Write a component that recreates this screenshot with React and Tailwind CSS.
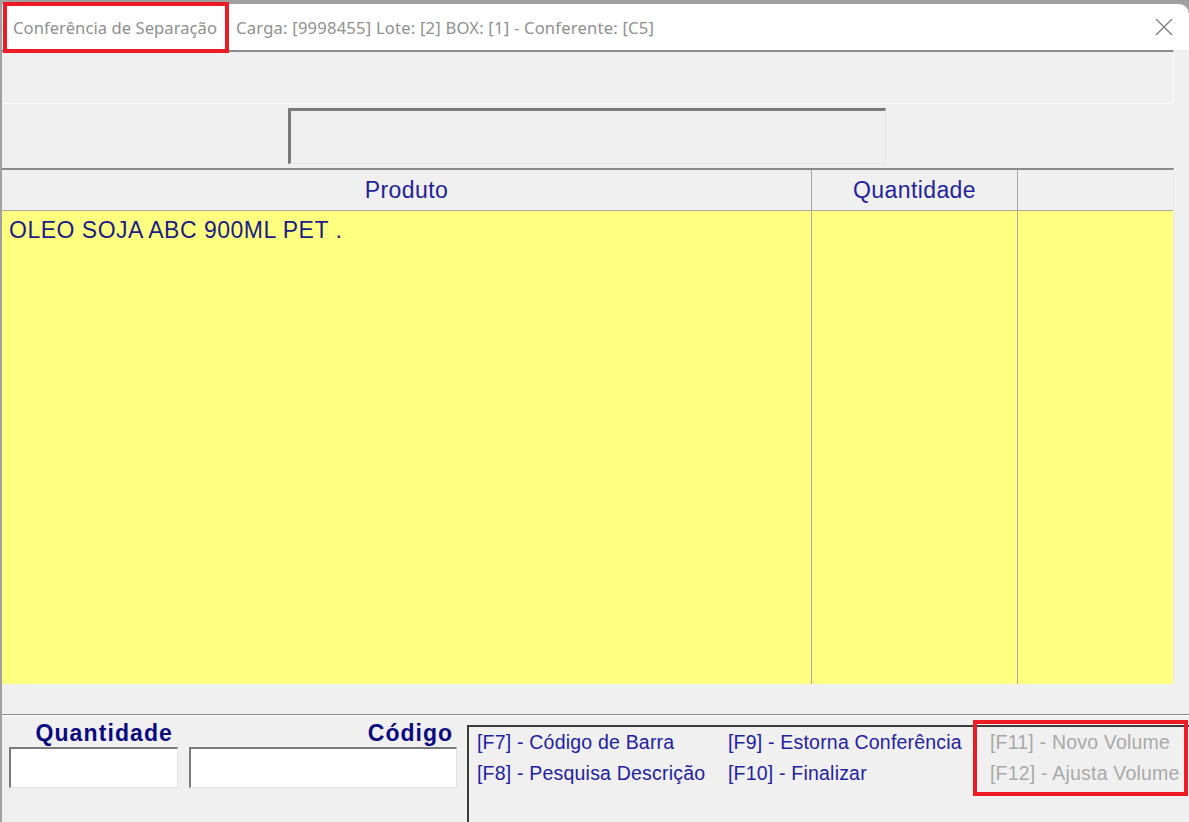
import React from "react";

const fkeys = [
  [
    { label: "[F7] - Código de Barra" },
    { label: "[F8] - Pesquisa Descrição" },
  ],
  [
    { label: "[F9] - Estorna Conferência" },
    { label: "[F10] - Finalizar" },
  ],
  [
    { label: "[F11] - Novo Volume", disabled: true },
    { label: "[F12] - Ajusta Volume", disabled: true },
  ],
];

const App = () => {
  return (
    <div className="relative w-[1189px] h-[822px] overflow-hidden bg-[#a0a0a0] pt-[4px] pl-[2px] flex flex-col">
      {/* Title bar */}
      <div className="h-[46px] shrink-0 bg-white rounded-tr-[10px] flex items-center pt-[3px] font-['Noto_Sans',sans-serif] text-[16.6px] text-[#8f8f8f]">
        <span className="ml-[11px] tracking-[0.05px]">Conferência de Separação</span>
        <span className="ml-[19px] tracking-[0.2px]">Carga: [9998455] Lote: [2] BOX: [1] - Conferente: [C5]</span>
        <svg className="ml-auto mr-[16px] -mt-[3px]" width="18" height="18" viewBox="0 0 18 18">
          <path d="M1 1 L17 17 M17 1 L1 17" stroke="#7a7a7a" strokeWidth="1.2" fill="none" />
        </svg>
      </div>

      {/* Window body */}
      <div className="flex-1 bg-[#f0f0f0] flex flex-col font-['Liberation_Sans',Arial,sans-serif]">
        {/* top panel */}
        <div className="h-[54px] shrink-0 mr-[15px] border-t-2 border-[#8a8a8a] border-r border-b border-r-[#fafafa] border-b-[#fafafa]" />

        {/* search box row */}
        <div className="h-[64px] shrink-0 flex items-center pl-[286px]">
          <div className="w-[598px] h-[56px] border-t-[3px] border-l-[3px] border-t-[#7a7a7a] border-l-[#7a7a7a] border-b border-r border-b-[#e4e4e4] border-r-[#e4e4e4]" />
        </div>

        {/* grid */}
        <div className="h-[516px] shrink-0 mr-[15px] border-t-2 border-[#8a8a8a] border-r border-r-[#e8e8e8] flex flex-col">
          <div className="h-[41px] shrink-0 flex border-b border-[#a8a8a8] text-[23px] tracking-[0.4px] text-[#23239a]">
            <div className="w-[809px] flex items-center justify-center">Produto</div>
            <div className="w-[206px] border-l border-[#a8a8a8] flex items-center justify-center">Quantidade</div>
            <div className="flex-1 border-l border-[#a8a8a8]" />
          </div>
          <div className="flex-1 flex bg-[#ffff80] text-[23px] tracking-[0.5px] text-[#1c1c88]">
            <div className="w-[809px] pl-[7px] pt-[4px] leading-[30px]">OLEO SOJA ABC 900ML PET .</div>
            <div className="w-[206px] border-l border-[#a8a8a8]" />
            <div className="flex-1 border-l border-[#a8a8a8]" />
          </div>
        </div>

        {/* separator */}
        <div className="h-[30px] shrink-0" />
        <div className="h-[2px] shrink-0 border-t border-[#8a8a8a] border-b border-b-white" />

        {/* bottom area */}
        <div className="flex-1 flex">
          <div className="flex pl-[7px] pt-[3px] gap-[11px]">
            <div className="w-[169px] flex flex-col">
              <div className="h-[28px] text-right pr-[5px] font-bold text-[23px] tracking-[1.1px] leading-[28px] text-[#0a0a80]">Quantidade</div>
              <div className="h-[41px] bg-white border-t-2 border-l-2 border-[#7a7a7a] border-b border-r border-b-[#e4e4e4] border-r-[#e4e4e4]" />
            </div>
            <div className="w-[268px] flex flex-col">
              <div className="h-[28px] text-right pr-[4px] font-bold text-[23px] tracking-[1px] leading-[28px] text-[#0a0a80]">Código</div>
              <div className="h-[41px] bg-white border-t-2 border-l-2 border-[#7a7a7a] border-b border-r border-b-[#e4e4e4] border-r-[#e4e4e4]" />
            </div>
          </div>
          <div className="flex-1 ml-[10px] mt-[9px] border-t-2 border-l-2 border-[#3c3c3c] flex pl-[8px] text-[19.5px] tracking-[0.2px]">
            {fkeys.map((col, i) => (
              <div key={i} className={i === 0 ? "w-[251px]" : i === 1 ? "w-[262px]" : "flex-1"}>
                {col.map((k) => (
                  <div
                    key={k.label}
                    className={"h-[31px] leading-[31px] " + (k.disabled ? "text-[#a9a9a9]" : "text-[#2222a0]")}
                  >
                    {k.label}
                  </div>
                ))}
              </div>
            ))}
          </div>
        </div>
      </div>

      {/* red highlight boxes */}
      <div className="absolute left-[3px] top-[2px] w-[226px] h-[51px] border-4 border-[#ed1c24]" />
      <div className="absolute left-[973px] top-[720px] w-[215px] h-[76px] border-4 border-[#ed1c24]" />
    </div>
  );
};

export default App;
